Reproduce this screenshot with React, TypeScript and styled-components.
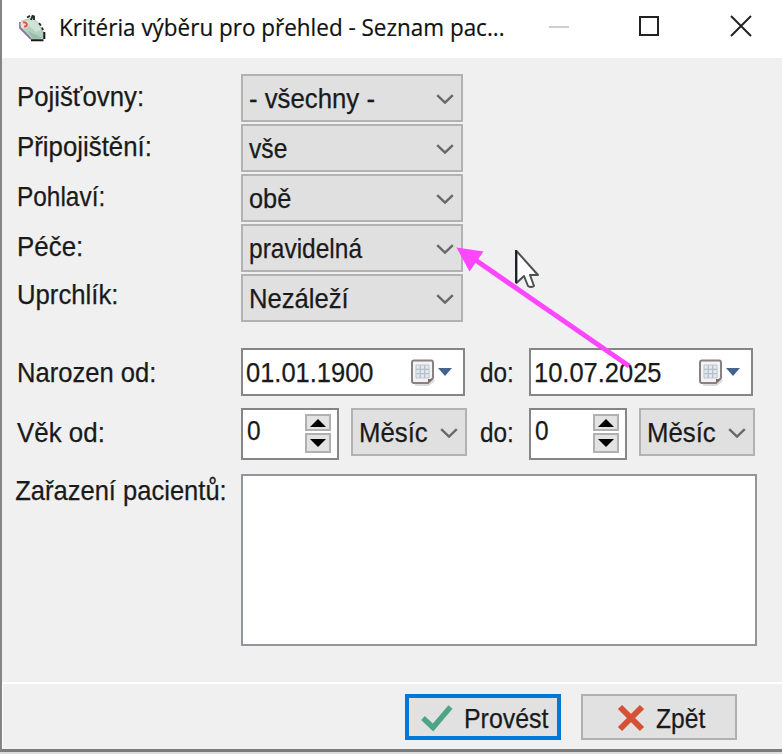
import React from "react";
import styled, { createGlobalStyle } from "styled-components";

const GlobalStyle = createGlobalStyle`
  *, *::before, *::after { box-sizing: border-box; }
  body { margin: 0; background: #f0f0f0; overflow: hidden; }
`;

const Desktop = styled.div`
  position: relative;
  width: 782px;
  height: 754px;
  background: #dcdcdc;
  overflow: hidden;
`;

const DialogWindow = styled.div`
  display: flex;
  flex-direction: column;
  height: 752px;
  border-left: 2px solid #858585;
  border-bottom: 3px solid #7b7b7b;
  background: #f0f0f0;
`;

const TitleBar = styled.header`
  display: flex;
  align-items: center;
  height: 58px;
  flex: none;
  padding-left: 16px;
  background: #fff;
`;

const Title = styled.h1`
  width: 498px;
  margin: 0 0 5px 11px;
  flex: none;
  font: 400 24px/32px "Open Sans", "Noto Sans", sans-serif;
  color: #111;
  -webkit-text-stroke: 0.2px #111;
  white-space: nowrap;
  transform: scaleX(0.936);
  transform-origin: left;
`;

const WindowControls = styled.div`
  display: flex;
  align-items: center;
  gap: 70px;
  margin: 0 0 6px -8px;
  svg { display: block; }
  svg:last-child { margin-left: 1px; }
`;

const Form = styled.main`
  flex: none;
  height: 624px;
  padding: 16px 0 0 15px;
`;

const Row = styled.div<{ $h: number; $gap?: number }>`
  display: flex;
  height: ${(p) => p.$h}px;
  margin-bottom: ${(p) => p.$gap ?? 0}px;
`;

const Text = styled.span<{ $scale?: number }>`
  display: block;
  font: 400 28px/28px "Liberation Sans", Arial, sans-serif;
  color: #1a1a1a;
  -webkit-text-stroke: 0.25px #1a1a1a;
  white-space: nowrap;
  transform: scaleX(${(p) => p.$scale ?? 0.925});
  transform-origin: left;
`;

const Label = styled.label<{ $top?: number; $shift?: number }>`
  flex: none;
  width: 224px;
  padding-top: ${(p) => p.$top ?? 9}px;
  text-indent: ${(p) => p.$shift ?? 0}px;
`;

const Until = styled.label`
  flex: none;
  width: 64px;
  padding: 11px 0 0 15px;
`;

const Combo = styled.div<{ $w: number }>`
  display: flex;
  justify-content: space-between;
  flex: none;
  width: ${(p) => p.$w}px;
  height: 48px;
  padding: 9px 7px 0 6px;
  border: 2px solid #b2b2b2;
  background: #e0e0e0;
  svg { flex: none; margin-top: 9px; }
  span { width: 0; }
`;

const DateField = styled.div`
  display: flex;
  flex: none;
  width: 224px;
  height: 48px;
  padding: 9px 0 0 3px;
  border: 2px solid #868686;
  background: #fff;
  span { width: 165px; }
  svg { flex: none; }
`;

const Spinner = styled.div`
  display: flex;
  flex: none;
  justify-content: space-between;
  width: 98px;
  height: 52px;
  margin-right: 12px;
  padding: 7px 6px 0 4px;
  border: 2px solid #868686;
  background: #fff;
`;

const SpinButtons = styled.div`
  display: flex;
  flex-direction: column;
  gap: 2px;
  margin-top: -3px;
`;

const SpinButton = styled.button<{ $h: number }>`
  display: flex;
  align-items: center;
  justify-content: center;
  width: 26px;
  height: ${(p) => p.$h}px;
  padding: 0;
  border: 2px solid #b0b0b0;
  background: #e3e3e3;
`;

const ListBox = styled.div`
  width: 516px;
  height: 172px;
  border: 2px solid #92959c;
  background: #fff;
`;

const Footer = styled.footer`
  display: flex;
  gap: 20px;
  flex: 1;
  padding: 10px 0 0 402px;
  border-top: 2px solid #fff;
  border-left: 1px solid #fff;
`;

const ActionButton = styled.button<{ $primary?: boolean; $pad: number }>`
  display: flex;
  gap: 11px;
  width: 156px;
  height: 46px;
  padding: ${(p) => (p.$primary ? 7 : 9)}px 0 0 ${(p) => p.$pad}px;
  border: ${(p) => (p.$primary ? "4px solid #0078d7" : "2px solid #b0b0b0")};
  background: #e1e1e1;
  svg { flex: none; margin-top: -1px; }
`;

const Annotation = styled.svg`
  position: absolute;
  left: 450px;
  top: 236px;
  pointer-events: none;
`;

const Chevron = () => (
  <svg width="18" height="11" viewBox="0 0 18 11" fill="none">
    <path d="M1.2 1.2 9 8.6 16.8 1.2" stroke="#686868" strokeWidth="2.4" />
  </svg>
);

const AppIcon = () => (
  <svg width="30" height="30" viewBox="18 13 30 30">
    <path d="M19 23 22 19 27 18 32 16 38 21 44 31V38L32 39 20 28Z" fill="#b3cfbf" />
    <path d="M27 19 33 18 38 22 41 29 36 31 29 25Z" fill="#cfe2d6" />
    <path d="M28 30 34 33 43 37 33 38Z" fill="#9cbbaa" />
    <path d="M20 21V27L31 38" fill="none" stroke="#8a75a0" strokeWidth="1.8" />
    <path d="M31 39.3H43.5M44.3 31V38" fill="none" stroke="#151a18" strokeWidth="2" />
    <path d="M39 22.2 41 24.5M42 26.5 43 29M27 16.5 30 14.8M31 19 32.5 15 34 15.5V19" fill="none" stroke="#252b28" strokeWidth="1.9" />
    <circle cx="24.5" cy="23.5" r="4" fill="#f1ddd2" />
    <path d="M23 21.5C28 20.5 28 26 24 25.5" fill="none" stroke="#e0553f" strokeWidth="2" />
  </svg>
);

const CalendarIcon = () => (
  <svg width="42" height="30" viewBox="0 0 42 30">
    <path d="M4 25.5H17L23 21" fill="none" stroke="#ddd" strokeWidth="3" />
    <path d="M3 1.5H20Q22 1.5 22 3.5V19L17 24H3Q1 24 1 22V3.5Q1 1.5 3 1.5Z" fill="#f3f3f3" stroke="#8b8180" strokeWidth="2" />
    <path d="M17 24V20H22Z" fill="#756e6e" />
    <path d="M5 6H18V19H5Z" fill="#e1e9f0" stroke="#bfc6cd" />
    <path d="M9.3 6V19M13.7 6V19M5 10.3H18M5 14.7H18" stroke="#b5bfc9" strokeWidth="1.3" />
    <path d="M27 9H41L34 17Z" fill="#46628f" />
  </svg>
);

const Triangle = ({ down = false }: { down?: boolean }) => (
  <svg width="16" height="8" viewBox="0 0 16 8">
    <path d={down ? "M0 0H16L8 8Z" : "M0 8H16L8 0Z"} fill="#000" />
  </svg>
);

const Select = ({ value, width = 222, scale }: { value: string; width?: number; scale?: number }) => (
  <Combo $w={width}><Text $scale={scale}>{value}</Text><Chevron /></Combo>
);

const DatePicker = ({ value }: { value: string }) => (
  <DateField><Text $scale={0.91}>{value}</Text><CalendarIcon /></DateField>
);

const AgeInput = () => (
  <>
    <Spinner>
      <Text $scale={0.87}>0</Text>
      <SpinButtons>
        <SpinButton $h={17} aria-label="+"><Triangle /></SpinButton>
        <SpinButton $h={20} aria-label="-"><Triangle down /></SpinButton>
      </SpinButtons>
    </Spinner>
    <Select value="Měsíc" width={116} scale={0.92} />
  </>
);

const filters = [
  { label: "Pojišťovny:", value: "- všechny -", labelScale: 0.92, scale: 0.92 },
  { label: "Připojištění:", value: "vše", labelScale: 0.922, scale: 0.88 },
  { label: "Pohlaví:", value: "obě", labelScale: 0.872, scale: 0.905 },
  { label: "Péče:", value: "pravidelná", labelScale: 0.925, scale: 0.875 },
  { label: "Uprchlík:", value: "Nezáleží", labelScale: 0.918, scale: 0.915, top: 7 },
];

export default function App() {
  return (
    <Desktop>
      <GlobalStyle />
      <DialogWindow>
        <TitleBar>
          <AppIcon />
          <Title>Kritéria výběru pro přehled - Seznam pac...</Title>
          <WindowControls>
            <svg width="20" height="22"><path d="M0 12H20" stroke="#cfcfcf" strokeWidth="2" /></svg>
            <svg width="20" height="22"><path d="M1 2H19V20H1Z" fill="none" stroke="#222" strokeWidth="2" /></svg>
            <svg width="22" height="22"><path d="M1 1 21 21M21 1 1 21" stroke="#222" strokeWidth="2" /></svg>
          </WindowControls>
        </TitleBar>
        <Form>
          {filters.map((f) => (
            <Row key={f.label} $h={48} $gap={f.top ? 26 : 2}>
              <Label $top={f.top}><Text $scale={f.labelScale}>{f.label}</Text></Label>
              <Select value={f.value} scale={f.scale} />
            </Row>
          ))}
          <Row $h={48} $gap={12}>
            <Label $top={11}><Text $scale={0.913}>Narozen od:</Text></Label>
            <DatePicker value="01.01.1900" />
            <Until><Text $scale={0.87}>do:</Text></Until>
            <DatePicker value="10.07.2025" />
          </Row>
          <Row $h={52} $gap={14}>
            <Label $top={11}><Text>Věk od:</Text></Label>
            <AgeInput />
            <Until as={AgeUntil}><Text $scale={0.87}>do:</Text></Until>
            <AgeInput />
          </Row>
          <Row $h={172}>
            <Label $top={3} $shift={-2}><Text $scale={0.912}>Zařazení pacientů:</Text></Label>
            <ListBox />
          </Row>
        </Form>
        <Footer>
          <ActionButton $primary $pad={12}>
            <svg width="32" height="28" viewBox="0 0 32 28"><path d="M2 14 12 23.5 29.5 3" fill="none" stroke="#4fa583" strokeWidth="5.4" /></svg>
            <Text $scale={0.89}>Provést</Text>
          </ActionButton>
          <ActionButton $pad={34}>
            <svg width="28" height="28" viewBox="0 0 28 28"><path d="M3 3 25 25M25 3 3 25" fill="none" stroke="#d55136" strokeWidth="6" /></svg>
            <Text $scale={0.88}>Zpět</Text>
          </ActionButton>
        </Footer>
      </DialogWindow>
      <Annotation width="190" height="150" viewBox="450 236 190 150">
        <path d="M516.5 251V283L524 276L528 286Q531 288 534 286L530 275H538Z" fill="#fff" stroke="#4b5052" strokeWidth="2" strokeLinejoin="round" />
        <path d="M516 250V283" stroke="#171729" strokeWidth="1.8" />
        <path d="M474 259 629 366" stroke="#ff46ff" strokeWidth="5" />
        <path d="M456.5 247.5 483.5 251.5 469.5 271.5Z" fill="#ff46ff" />
      </Annotation>
    </Desktop>
  );
}

const AgeUntil = styled.label`
  flex: none;
  width: 62px;
  padding: 11px 0 0 13px;
`;
